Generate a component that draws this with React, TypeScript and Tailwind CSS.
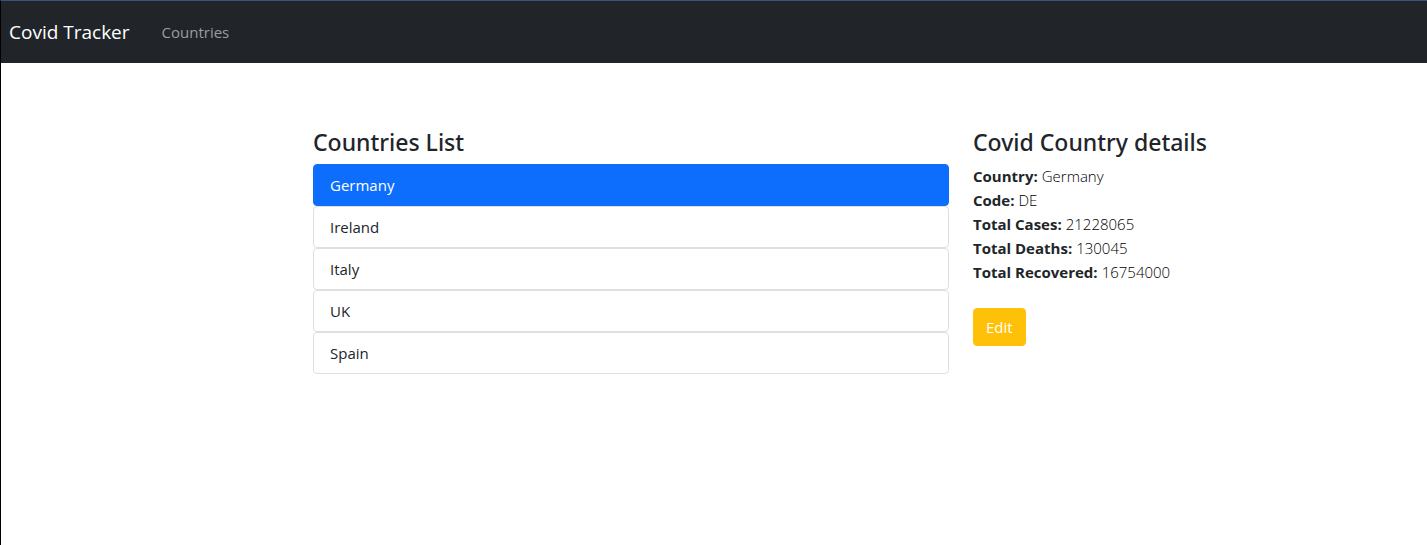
import { useState } from "react";

type Country = {
  name: string;
  code: string;
  cases?: number;
  deaths?: number;
  recovered?: number;
};

const countries: Country[] = [
  { name: "Germany", code: "DE", cases: 21228065, deaths: 130045, recovered: 16754000 },
  { name: "Ireland", code: "IE" },
  { name: "Italy", code: "IT" },
  { name: "UK", code: "GB" },
  { name: "Spain", code: "ES" },
];

function Navbar() {
  return (
    <nav className="flex h-[62px] items-center gap-8 bg-[#212529] px-2">
      <a href="#" className="text-[19px] leading-8 text-white">
        Covid Tracker
      </a>
      <a href="#countries" className="text-[15px] leading-6 text-[#9b9d9f]">
        Countries
      </a>
    </nav>
  );
}

function Heading({ children }: { children: string }) {
  return (
    <h2 className="mb-1.5 font-['Noto_Sans','Open_Sans',sans-serif] text-[23px] leading-[31px] font-medium">
      {children}
    </h2>
  );
}

function Detail({ label, value }: { label: string; value?: string | number }) {
  return (
    <div className="flex gap-1">
      <dt className="font-bold">{label}:</dt>
      <dd className="font-light text-black">{value ?? "-"}</dd>
    </div>
  );
}

export default function App() {
  const [selected, setSelected] = useState(0);
  const current = countries[selected];

  return (
    <div className="min-h-screen border-t border-l border-t-[#35567d] border-l-black bg-white font-['Open_Sans','Noto_Sans',sans-serif] text-[15px] leading-6 text-[#212529]">
      <Navbar />
      <main className="mx-auto flex max-w-[1320px] gap-6 pt-16 pl-[259px]">
        <section className="w-3/5 max-w-[636px]">
          <Heading>Countries List</Heading>
          <ul>
            {countries.map((country, index) => (
              <li key={country.code}>
                <button
                  type="button"
                  onClick={() => setSelected(index)}
                  className={
                    index === selected
                      ? "block w-full rounded border border-[#0d6efd] bg-[#0d6efd] px-4 py-2 text-left text-white"
                      : "block w-full rounded border border-[#dfdfdf] bg-white px-4 py-2 text-left"
                  }
                >
                  {country.name}
                </button>
              </li>
            ))}
          </ul>
        </section>
        <section className="flex-1">
          <Heading>Covid Country details</Heading>
          <dl>
            <Detail label="Country" value={current.name} />
            <Detail label="Code" value={current.code} />
            <Detail label="Total Cases" value={current.cases} />
            <Detail label="Total Deaths" value={current.deaths} />
            <Detail label="Total Recovered" value={current.recovered} />
          </dl>
          <button
            type="button"
            className="mt-6 rounded border border-[#ffc107] bg-[#ffc107] px-3 py-1.5 text-white"
          >
            Edit
          </button>
        </section>
      </main>
    </div>
  );
}
